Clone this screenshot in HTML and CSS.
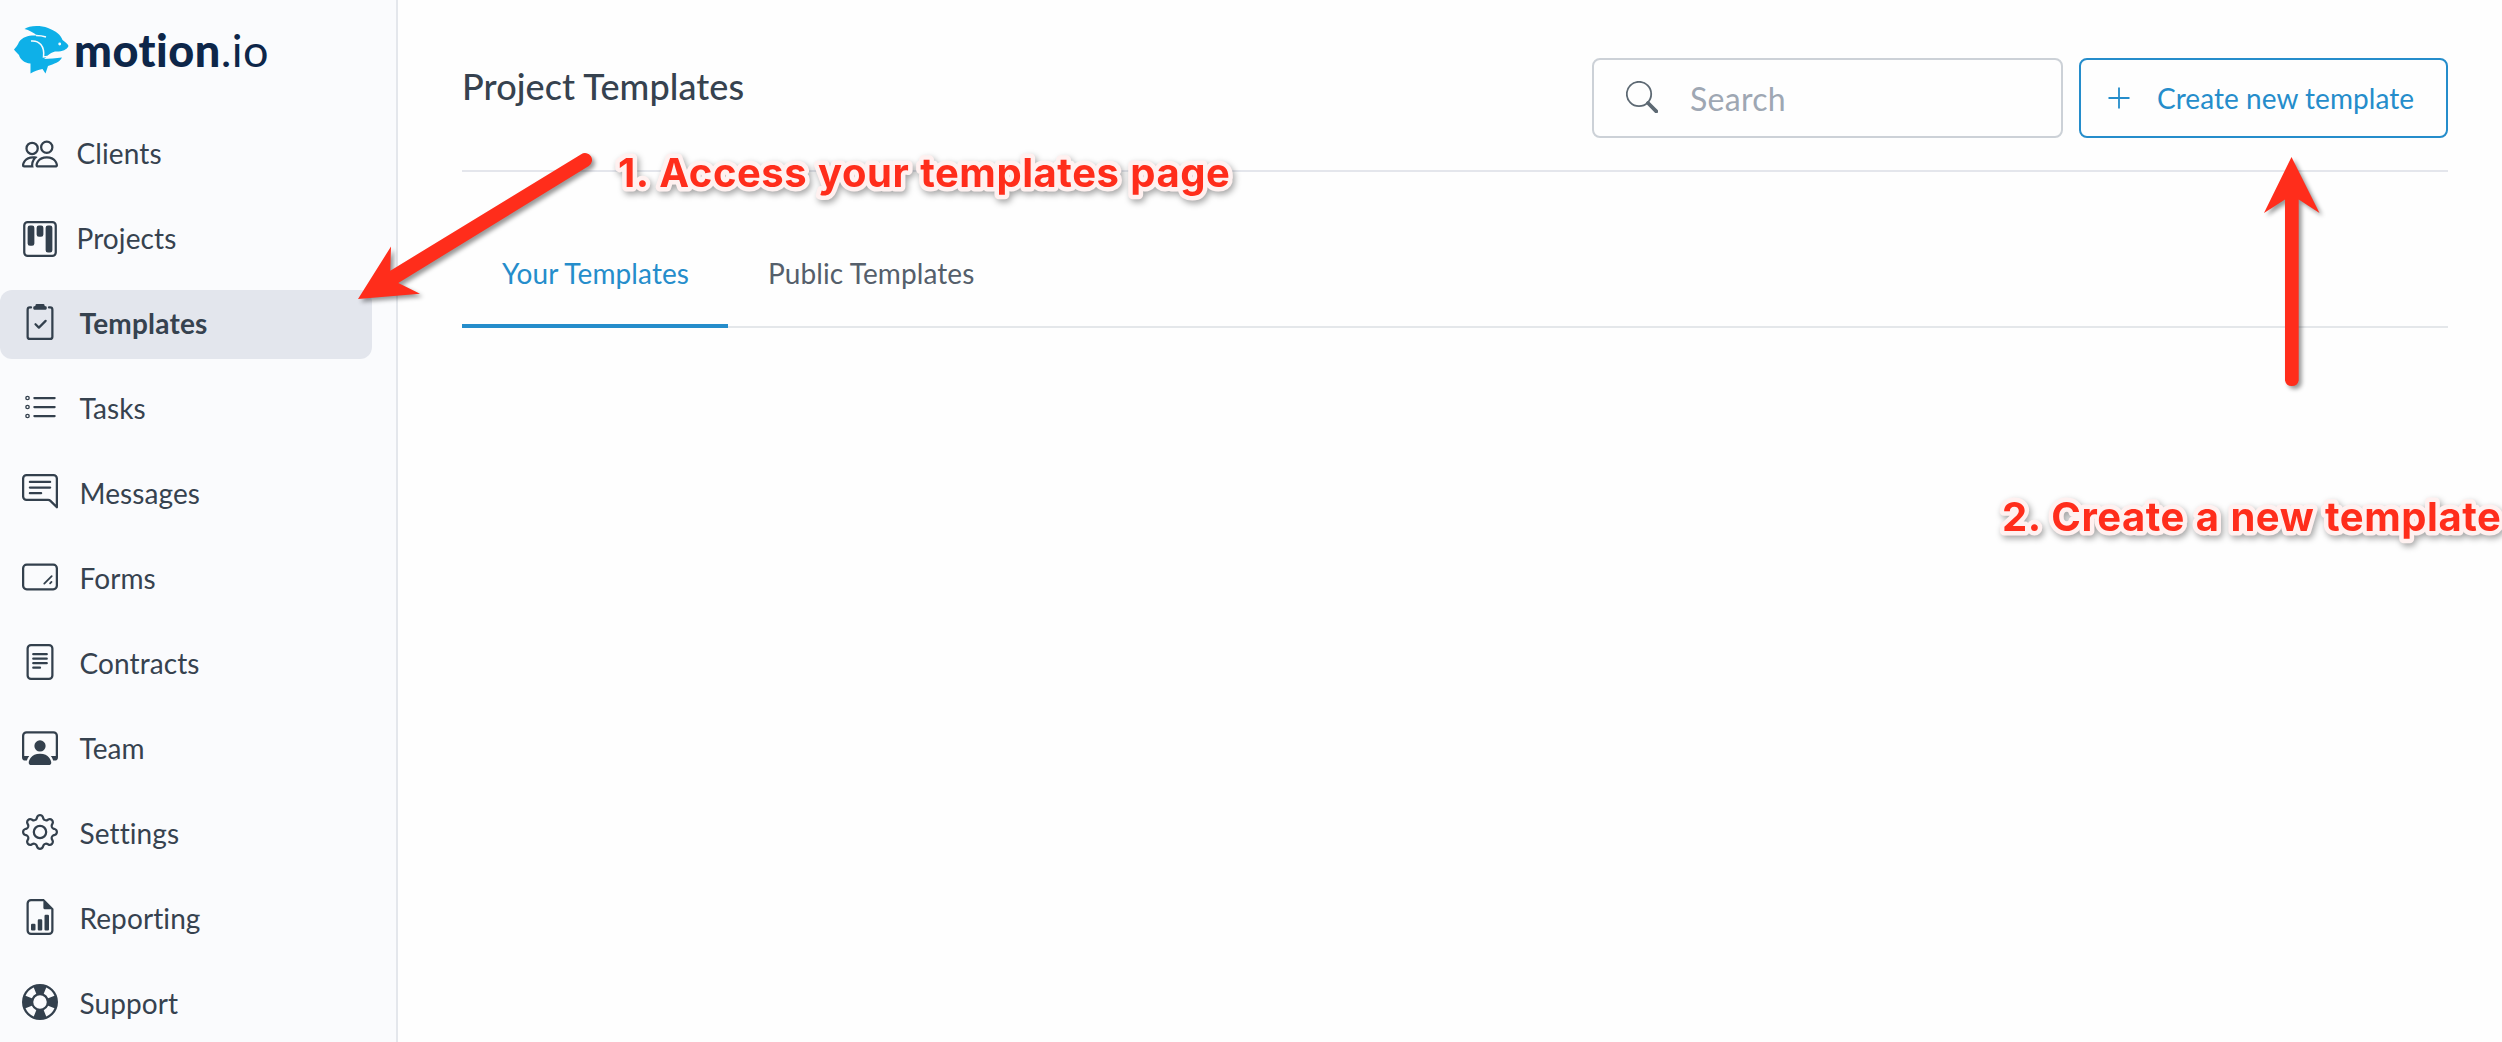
FILE: index.html
```html
<!DOCTYPE html>
<html lang="en">
<head>
<meta charset="utf-8">
<title>Project Templates</title>
<link rel="stylesheet" href="styles.css">
</head>
<body>
<div class="app">
  <aside class="sidebar">
    <a class="logo">
      <svg class="logo-mark" viewBox="0 0 56 50">
        <path fill="#0eb0e8" d="M10.500 4C15 .5 26 0 34 3C42 6 47 10 48.500 15C51 17 54 19 54.500 21C53 25 47 27 41 26.500C35 28 33 32 30 34C35 34 42 33 48 32.500C46 37 40 39 34 41L31.500 48.500L28.500 44C24 45 20 46 16.500 48.500V38.500C10 38 6 34 5 30C3 28 1 26 0 24.500C2 22 4 20 5 17C9 11 16 10 23 10.500C20 8 15 5 10.500 4Z"/>
        <path fill="none" stroke="#fafbfd" stroke-width="1.500" d="M17 16C25 15 31 21 29.500 32L41 30.500C44 30 46 29 49 27M22 10.500C26 10.500 29 11 32 12"/>
        <circle cx="45.700" cy="19" r="1.400" fill="#fafbfd"/>
      </svg>
      <span class="logo-text"><b>motion</b>.io</span>
    </a>
    <nav class="nav">
      <a class="nav-link first">
        <svg class="icon" viewBox="0 0 16 16"><path d="M15 14s1 0 1-1-1-4-5-4-5 3-5 4 1 1 1 1h8zm-7.978-1A.261.261 0 0 1 7 12.996c.001-.264.167-1.030.760-1.720C8.312 10.629 9.282 10 11 10c1.717 0 2.687.630 3.240 1.276.593.690.758 1.457.760 1.720l-.008.002a.274.274 0 0 1-.014.002H7.022zM11 7a2 2 0 1 0 0-4 2 2 0 0 0 0 4zm3-2a3 3 0 1 1-6 0 3 3 0 0 1 6 0zM6.936 9.280a5.880 5.880 0 0 0-1.230-.247A7.350 7.350 0 0 0 5 9c-4 0-5 3-5 4 0 .667.333 1 1 1h4.216A2.238 2.238 0 0 1 5 13c0-1.010.377-2.042 1.090-2.904.243-.294.526-.569.846-.816zM4.920 10A5.493 5.493 0 0 0 4 13H1c0-.260.164-1.030.760-1.724.545-.636 1.492-1.256 3.160-1.275zM1.500 5.500a3 3 0 1 1 6 0 3 3 0 0 1-6 0zm3-2a2 2 0 1 0 0 4 2 2 0 0 0 0-4z"/></svg>
        <span>Clients</span>
      </a>
      <a class="nav-link first">
        <svg class="icon" viewBox="0 0 16 16"><path d="M13.500 1a1 1 0 0 1 1 1v12a1 1 0 0 1-1 1h-11a1 1 0 0 1-1-1V2a1 1 0 0 1 1-1h11zm-11-1a2 2 0 0 0-2 2v12a2 2 0 0 0 2 2h11a2 2 0 0 0 2-2V2a2 2 0 0 0-2-2h-11z"/><path d="M6.500 3a1 1 0 0 1 1-1h1a1 1 0 0 1 1 1v3a1 1 0 0 1-1 1h-1a1 1 0 0 1-1-1V3zm-4 0a1 1 0 0 1 1-1h1a1 1 0 0 1 1 1v7a1 1 0 0 1-1 1h-1a1 1 0 0 1-1-1V3zm8 0a1 1 0 0 1 1-1h1a1 1 0 0 1 1 1v10a1 1 0 0 1-1 1h-1a1 1 0 0 1-1-1V3z"/></svg>
        <span>Projects</span>
      </a>
      <a class="nav-link active">
        <svg class="icon" viewBox="0 0 16 16"><path d="M9.500 0a.5.5 0 0 1 .5.5.5.5 0 0 0 .5.5.5.5 0 0 1 .5.5V2a.5.5 0 0 1-.5.5h-5A.5.5 0 0 1 5 2v-.5a.5.5 0 0 1 .5-.5.5.5 0 0 0 .5-.5.5.5 0 0 1 .5-.5h3Z"/><path d="M3 2.500a.5.5 0 0 1 .5-.5H4a.5.5 0 0 0 0-1h-.5A1.500 1.500 0 0 0 2 2.500v12A1.500 1.500 0 0 0 3.500 16h9a1.500 1.500 0 0 0 1.500-1.500v-12A1.500 1.500 0 0 0 12.500 1H12a.5.5 0 0 0 0 1h.5a.5.5 0 0 1 .5.5v12a.5.5 0 0 1-.5.5h-9a.5.5 0 0 1-.5-.5v-12Z"/><path d="M10.854 7.854a.5.5 0 0 0-.708-.708L7.500 9.793 6.354 8.646a.5.5 0 1 0-.708.708l1.500 1.500a.5.5 0 0 0 .708 0l3-3Z"/></svg>
        <span>Templates</span>
      </a>
      <a class="nav-link">
        <svg class="icon line" viewBox="0 0 16 16"><path d="M5.500 4h9M5.500 8h9M5.500 12h9"/><g stroke-width=".6"><circle cx="2.450" cy="4" r=".75"/><circle cx="2.450" cy="8" r=".75"/><circle cx="2.450" cy="12" r=".75"/></g></svg>
        <span>Tasks</span>
      </a>
      <a class="nav-link">
        <svg class="icon" viewBox="0 0 16 16"><path d="M2 1a1 1 0 0 0-1 1v8a1 1 0 0 0 1 1h9.586a2 2 0 0 1 1.414.586l2 2V2a1 1 0 0 0-1-1H2zm12-1a2 2 0 0 1 2 2v12.793a.5.5 0 0 1-.854.353l-2.853-2.853a1 1 0 0 0-.707-.293H2a2 2 0 0 1-2-2V2a2 2 0 0 1 2-2h12z"/><path d="M3 3.500a.5.5 0 0 1 .5-.5h9a.5.5 0 0 1 0 1h-9a.5.5 0 0 1-.5-.5zM3 6a.5.5 0 0 1 .5-.5h9a.5.5 0 0 1 0 1h-9A.5.5 0 0 1 3 6zm0 2.500a.5.5 0 0 1 .5-.5h5a.5.5 0 0 1 0 1h-5a.5.5 0 0 1-.5-.5z"/></svg>
        <span>Messages</span>
      </a>
      <a class="nav-link">
        <svg class="icon line" viewBox="0 0 16 16"><rect x=".5" y="2.500" width="15" height="11" rx="1.600"/><path stroke-width=".8" d="M9.900 10.900 13.200 7.600M12.500 10.800 13.100 10.200"/></svg>
        <span>Forms</span>
      </a>
      <a class="nav-link">
        <svg class="icon" viewBox="0 0 16 16"><path d="M5 4a.5.5 0 0 0 0 1h6a.5.5 0 0 0 0-1H5zm-.5 2.500A.5.5 0 0 1 5 6h6a.5.5 0 0 1 0 1H5a.5.5 0 0 1-.5-.5zM5 8a.5.5 0 0 0 0 1h6a.5.5 0 0 0 0-1H5zm0 2a.5.5 0 0 0 0 1h3a.5.5 0 0 0 0-1H5z"/><path d="M2 2a2 2 0 0 1 2-2h8a2 2 0 0 1 2 2v12a2 2 0 0 1-2 2H4a2 2 0 0 1-2-2V2zm10-1H4a1 1 0 0 0-1 1v12a1 1 0 0 0 1 1h8a1 1 0 0 0 1-1V2a1 1 0 0 0-1-1z"/></svg>
        <span>Contracts</span>
      </a>
      <a class="nav-link">
        <svg class="icon" viewBox="0 0 16 16"><path d="M4 16s-1 0-1-1 1-4 5-4 5 3 5 4-1 1-1 1H4Zm4-5.950a2.500 2.500 0 1 0 0-5 2.500 2.500 0 0 0 0 5Z"/><path d="M2 1a2 2 0 0 0-2 2v9.500A1.500 1.500 0 0 0 1.500 14h.653a5.373 5.373 0 0 1 1.066-2H1V3a1 1 0 0 1 1-1h12a1 1 0 0 1 1 1v9h-2.219c.554.654.890 1.373 1.066 2h.653a1.500 1.500 0 0 0 1.500-1.500V3a2 2 0 0 0-2-2H2Z"/></svg>
        <span>Team</span>
      </a>
      <a class="nav-link">
        <svg class="icon" viewBox="0 0 16 16"><path d="M8 4.754a3.246 3.246 0 1 0 0 6.492 3.246 3.246 0 0 0 0-6.492zM5.754 8a2.246 2.246 0 1 1 4.492 0 2.246 2.246 0 0 1-4.492 0z"/><path d="M9.796 1.343c-.527-1.790-3.065-1.790-3.592 0l-.094.319a.873.873 0 0 1-1.255.520l-.292-.160c-1.640-.892-3.433.902-2.540 2.541l.159.292a.873.873 0 0 1-.520 1.255l-.319.094c-1.790.527-1.790 3.065 0 3.592l.319.094a.873.873 0 0 1 .520 1.255l-.160.292c-.892 1.640.901 3.434 2.541 2.540l.292-.159a.873.873 0 0 1 1.255.520l.094.319c.527 1.790 3.065 1.790 3.592 0l.094-.319a.873.873 0 0 1 1.255-.520l.292.160c1.640.893 3.434-.902 2.540-2.541l-.159-.292a.873.873 0 0 1 .520-1.255l.319-.094c1.790-.527 1.790-3.065 0-3.592l-.319-.094a.873.873 0 0 1-.520-1.255l.160-.292c.893-1.640-.902-3.433-2.541-2.540l-.292.159a.873.873 0 0 1-1.255-.520l-.094-.319zm-2.633.283c.246-.835 1.428-.835 1.674 0l.094.319a1.873 1.873 0 0 0 2.693 1.115l.291-.160c.764-.415 1.600.420 1.184 1.185l-.159.292a1.873 1.873 0 0 0 1.116 2.692l.318.094c.835.246.835 1.428 0 1.674l-.319.094a1.873 1.873 0 0 0-1.115 2.693l.160.291c.415.764-.420 1.600-1.185 1.184l-.291-.159a1.873 1.873 0 0 0-2.693 1.116l-.094.318c-.246.835-1.428.835-1.674 0l-.094-.319a1.873 1.873 0 0 0-2.692-1.115l-.292.160c-.764.415-1.600-.420-1.184-1.185l.159-.291A1.873 1.873 0 0 0 1.945 8.930l-.319-.094c-.835-.246-.835-1.428 0-1.674l.319-.094A1.873 1.873 0 0 0 3.060 4.377l-.160-.292c-.415-.764.420-1.600 1.185-1.184l.292.159a1.873 1.873 0 0 0 2.692-1.115l.094-.319z"/></svg>
        <span>Settings</span>
      </a>
      <a class="nav-link">
        <svg class="icon" viewBox="0 0 16 16"><path d="M10 13.500a.5.5 0 0 0 .5.5h1a.5.5 0 0 0 .5-.5v-6a.5.5 0 0 0-.5-.5h-1a.5.5 0 0 0-.5.5v6zm-2.500.5a.5.5 0 0 1-.5-.5v-4a.5.5 0 0 1 .5-.5h1a.5.5 0 0 1 .5.5v4a.5.5 0 0 1-.5.5h-1zm-3 0a.5.5 0 0 1-.5-.5v-2a.5.5 0 0 1 .5-.5h1a.5.5 0 0 1 .5.5v2a.5.5 0 0 1-.5.5h-1z"/><path fill-rule="evenodd" d="M4 0h5.700L14 4.300V14a2 2 0 0 1-2 2H4a2 2 0 0 1-2-2V2a2 2 0 0 1 2-2zm0 1a1 1 0 0 0-1 1v12a1 1 0 0 0 1 1h8a1 1 0 0 0 1-1V4.500h-3a.5.5 0 0 1-.5-.5V1z"/></svg>
        <span>Reporting</span>
      </a>
      <a class="nav-link">
        <svg class="icon" viewBox="0 0 16 16"><path d="M8 16A8 8 0 1 0 8 0a8 8 0 0 0 0 16zm6.430-5.228a7.025 7.025 0 0 1-3.658 3.658l-1.115-2.788a4.015 4.015 0 0 0 1.985-1.985l2.788 1.115zM5.228 14.430a7.025 7.025 0 0 1-3.658-3.658l2.788-1.115a4.015 4.015 0 0 0 1.985 1.985L5.228 14.430zm9.202-9.202-2.788 1.115a4.015 4.015 0 0 0-1.985-1.985l1.115-2.788a7.025 7.025 0 0 1 3.658 3.658zm-8.087-.870a4.015 4.015 0 0 0-1.985 1.985L1.570 5.228A7.025 7.025 0 0 1 5.228 1.570l1.115 2.788zM8 11a3 3 0 1 1 0-6 3 3 0 0 1 0 6z"/></svg>
        <span>Support</span>
      </a>
    </nav>
  </aside>

  <main class="main">
    <header class="header">
      <h1>Project Templates</h1>
      <div class="actions">
        <label class="search">
          <svg class="search-icon" viewBox="0 0 32 32"><circle cx="13" cy="13" r="12.200"/><path d="M22 22 30.300 30.300"/></svg>
          <input type="text" placeholder="Search">
        </label>
        <button class="create">
          <svg class="plus" viewBox="0 0 22 22"><path d="M11 .5v21M.5 11h21"/></svg>
          <span>Create new template</span>
        </button>
      </div>
    </header>
    <div class="tabs">
      <a class="tab selected">Your Templates</a>
      <a class="tab">Public Templates</a>
    </div>
  </main>
</div>

<!-- walkthrough steps drawn over the page -->
<svg class="steps" viewBox="0 0 2502 1042">
  <g class="arrow">
    <path d="M358 299 391 246.500 390.300 270.700 581.200 154.200A7 7 0 0 1 588.800 166L398.300 283 420 293.700Z"/>
    <path d="M2291.500 157 2319.500 213 2298.700 199.500V380.500A7 7 0 0 1 2285 380.500V199.500L2264 213Z"/>
  </g>
  <text x="618" y="187">1. Access your templates page</text>
  <text x="2002" y="531">2. Create a new template</text>
</svg>
</body>
</html>
```

FILE: styles.css
```css
* {
  box-sizing: border-box;
}

body {
  margin: 0;
  font-family: Lato, "Liberation Sans", sans-serif;
  font-size: 28px;
  font-variant-ligatures: none;
  letter-spacing: .1px;
  color: #36424f;
  background: #fefefe;
  overflow: hidden;
}

.app {
  display: flex;
  height: 1042px;
}

/* Sidebar */
.sidebar {
  width: 398px;
  flex: none;
  background: #fafbfd;
  border-right: 2px solid #e4e7ec;
  overflow: hidden;
}

.logo {
  display: flex;
  height: 120px;
  padding: 25px 0 0 14px;
}

.logo-mark {
  width: 56px;
  height: 50px;
}

.logo-text {
  margin: -2px 0 0 4px;
  font-size: 45px;
  line-height: 54px;
  letter-spacing: .5px;
  font-weight: 400;
  color: #0d2649;
}

.logo-text b {
  font-weight: 900;
}

.nav {
  display: flex;
  flex-direction: column;
  gap: 16px;
}

.nav-link {
  display: flex;
  align-items: center;
  gap: 21.5px;
  width: 372px;
  height: 69px;
  padding-left: 22px;
  border-radius: 12px;
}

.nav-link.first {
  gap: 18.5px;
}

.nav-link.active {
  background: #e3e6ed;
  font-weight: 700;
  letter-spacing: .2px;
}

.nav-link span {
  margin-bottom: 3px;
}

.icon {
  width: 36px;
  height: 36px;
  margin-bottom: 5px;
  fill: #33404d;
}

.first .icon {
  margin-bottom: 2px;
}

.icon.line {
  fill: none;
  stroke: #33404d;
  stroke-linecap: round;
}

/* Main area */
.main {
  flex: 1;
  padding: 0 54px 0 64px;
}

.header {
  display: flex;
  justify-content: space-between;
  height: 172px;
  padding-top: 58px;
  border-bottom: 2px solid #e4e6ec;
}

h1 {
  margin: 6px 0 0;
  font-size: 36px;
  line-height: 44px;
  font-weight: 500;
}

.actions {
  display: flex;
  gap: 16px;
  height: 80px;
}

.search {
  display: flex;
  align-items: center;
  width: 471px;
  padding-left: 32px;
  border: 2px solid #ccd1d7;
  border-radius: 8px;
}

.search-icon {
  width: 32px;
  height: 32px;
  margin-bottom: 2px;
  fill: none;
  stroke: #5d6973;
  stroke-width: 1.8;
}

.search-icon path {
  stroke-width: 3.8;
  stroke-linecap: round;
}

.search input {
  width: 330px;
  margin-left: 32px;
  padding: 0;
  border: 0;
  outline: 0;
  background: none;
  font: 32px Lato, "Liberation Sans", sans-serif;
  letter-spacing: .3px;
}

.search input::placeholder {
  color: #9ea7b3;
}

.create {
  display: flex;
  align-items: center;
  width: 369px;
  padding: 0 0 0 27px;
  border: 2px solid #258dcb;
  border-radius: 8px;
  background: #fefefe;
  color: #258dcb;
  font: 28px Lato, "Liberation Sans", sans-serif;
  letter-spacing: .05px;
}

.plus {
  width: 22px;
  height: 22px;
  margin: 0 27px 1px 0;
  stroke: #258dcb;
  stroke-width: 1.8;
}

.tabs {
  display: flex;
  height: 156px;
  border-bottom: 2px solid #e4e7ea;
}

.tab {
  height: 156px;
  padding: 83px 40px 0;
  line-height: 36px;
  color: #555f6b;
}

.tab.selected {
  width: 266px;
  padding-right: 0;
  color: #258dcb;
  border-bottom: 4px solid #258dcb;
}

/* Step labels and arrows */
.steps {
  position: absolute;
  top: 0;
  left: 0;
  width: 2502px;
  height: 1042px;
  pointer-events: none;
}

.arrow {
  fill: #ff2d1b;
  filter: drop-shadow(3px 3px 2px rgba(0, 0, 0, .4));
}

.steps text {
  font-family: Inter, "Liberation Sans", sans-serif;
  font-size: 40px;
  font-weight: 700;
  letter-spacing: .55px;
  word-spacing: .8px;
  fill: #ff2d1b;
  stroke: #fff1f0;
  stroke-width: 9px;
  stroke-linejoin: round;
  paint-order: stroke;
  filter: drop-shadow(2px 3px 3px rgba(0, 0, 0, .35));
}
```
